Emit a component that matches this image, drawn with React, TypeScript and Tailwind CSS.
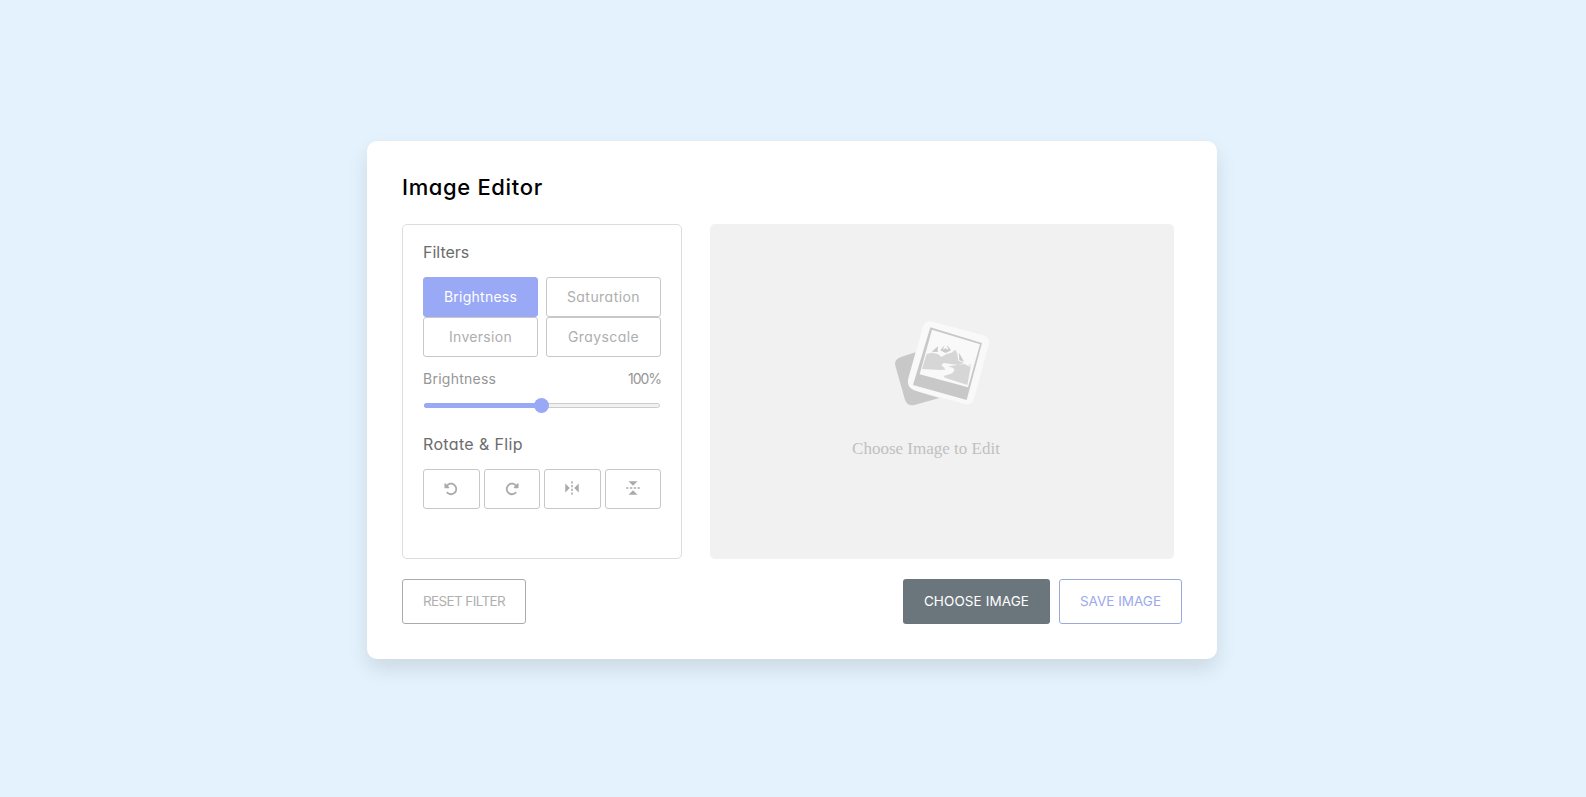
import { useState } from "react";
import { FaRotateLeft, FaRotateRight } from "react-icons/fa6";
import { BiReflectHorizontal, BiReflectVertical } from "react-icons/bi";

const filters = [
  { name: "Brightness", tracking: "tracking-[0.25px]" },
  { name: "Saturation", tracking: "tracking-[0.45px]" },
  { name: "Inversion", tracking: "tracking-[0.3px]" },
  { name: "Grayscale", tracking: "tracking-[0.4px]" },
];

function Placeholder() {
  return (
    <svg className="ml-[2px] h-[100px] w-[116px]" viewBox="0 0 348 300">
      <path
        d="M92 118 L50 131 Q26 138 31 158 L60 260 Q67 280 88 276 L163 255 L100 236 Q62 222 70 194 Z"
        fill="#c8c8c8"
      />
      <path
        d="M143 26 L294 67 Q317 74 311 96 L267 258 Q261 278 240 273 L86 231 Q65 223 70 202 L113 43 Q119 20 143 26 Z"
        fill="#f9f9f9"
      />
      <path d="M136 43 L291 90 L245 261 L84 216 Z" fill="#c8c8c8" />
      <path d="M141 50 L285 94 L249 223 L104 184 Z" fill="#f9f9f9" />
      <path
        d="M125 123 L141 119 L158 123 L170 132 L183 124 L199 119 L211 110 L217 122 L220 143 L237 150 L220 156 L176 150 L169 157 L178 164 L181 170 L166 171 L111 168 Z"
        fill="#d6d6d6"
      />
      <path
        d="M221 155 L238 153 L257 162 L247 216 L180 194 L176 189 L202 181 L209 170 L203 164 L190 160 Z"
        fill="#d6d6d6"
      />
      <path
        d="M140 116 L159 100 L158 117 Z M166 112 L178 97 L174 110 L182 106 L190 111 L186 96 L198 112 L182 120 Z M222 119 L237 146 L223 142 Z"
        fill="#cacaca"
      />
      <path d="M251 156 l5 -2 l2 5 Z" fill="#cacaca" />
    </svg>
  );
}

export default function App() {
  const [active, setActive] = useState("Brightness");
  return (
    <div className="flex h-[797px] items-center justify-center bg-[#e3f2fd] pt-[3px] pr-[2px] font-['Inter',sans-serif] [font-feature-settings:'cv11']">
      <main className="h-[518px] w-[850px] rounded-[10px] bg-white px-[35px] pt-[30px] shadow-[0_10px_20px_rgba(0,0,0,0.1)]">
        <h2 className="h-[33px] text-[22px] leading-[33px] font-medium tracking-[0.65px] text-black">Image Editor</h2>
        <div className="mt-5 flex h-[335px] gap-7">
          <section className="w-[280px] shrink-0 rounded-[5px] border border-[#dddddd] px-5 pt-[15px]">
            <h3 className="h-6 text-base leading-6 text-[#6c6c6c]">Filters</h3>
            <div className="mt-[13px] grid grid-cols-2 gap-x-2">
              {filters.map(({ name, tracking }) => (
                <button
                  key={name}
                  onClick={() => setActive(name)}
                  className={`h-10 rounded-[3px] border text-sm ${tracking} ${
                    active === name ? "border-[#99a9f6] bg-[#99a9f6] text-white" : "border-[#c7c7c7] text-[#aeaeae]"
                  }`}
                >
                  {name}
                </button>
              ))}
            </div>
            <div className="mt-3 flex h-[21px] justify-between text-sm leading-[19px] text-[#969696]">
              <span className="tracking-[0.25px]">{active}</span>
              <span className="-tracking-[1.05px]">100%</span>
            </div>
            <div className="mt-2 flex h-[15px] items-center">
              <div className="ml-px flex h-[5px] w-[236px] items-center rounded-full border border-[#cccccc] bg-[#f1f1f1]">
                <div className="-ml-px h-[5px] w-[111px] rounded-l-full bg-[#99a9f6]" />
                <div className="-ml-px size-[15px] shrink-0 rounded-full bg-[#99a9f6]" />
              </div>
            </div>
            <h3 className="mt-5 h-6 text-base leading-[22px] tracking-[0.35px] text-[#6c6c6c]">Rotate &amp; Flip</h3>
            <div className="mt-3 grid grid-cols-4 gap-1 text-[#aaaaaa]">
              <button className="flex h-10 items-center justify-center rounded-[3px] border border-[#c7c7c7]">
                <FaRotateLeft className="size-[14px]" />
              </button>
              <button className="flex h-10 items-center justify-center rounded-[3px] border border-[#c7c7c7]">
                <FaRotateRight className="size-[14px]" />
              </button>
              <button className="flex h-10 items-center justify-center rounded-[3px] border border-[#c7c7c7] pb-[2px]">
                <BiReflectVertical className="size-[18px]" />
              </button>
              <button className="flex h-10 items-center justify-center rounded-[3px] border border-[#c7c7c7] pb-[2px]">
                <BiReflectHorizontal className="size-[18px]" />
              </button>
            </div>
          </section>
          <section className="flex w-[464px] flex-col items-center rounded-[5px] bg-[#f1f1f1] pt-[89px]">
            <Placeholder />
            <span className="mt-[26px] mr-8 font-['Liberation_Serif',serif] text-[17px] leading-5 text-[#c0c0c0]">
              Choose Image to Edit
            </span>
          </section>
        </div>
        <footer className="mt-5 flex h-[45px] text-[13.5px]">
          <button className="w-[124px] shrink-0 rounded-[3px] border border-[#a9abad] -tracking-[0.62px] text-[#b0b0b0]">
            RESET FILTER
          </button>
          <button className="ml-[377px] w-[147px] shrink-0 rounded-[3px] bg-[#6b767c] tracking-[0.1px] text-white">
            CHOOSE IMAGE
          </button>
          <button className="ml-[9px] w-[123px] shrink-0 rounded-[3px] border border-[#9aa8df] text-[#9ca9ed]">
            SAVE IMAGE
          </button>
        </footer>
      </main>
    </div>
  );
}
